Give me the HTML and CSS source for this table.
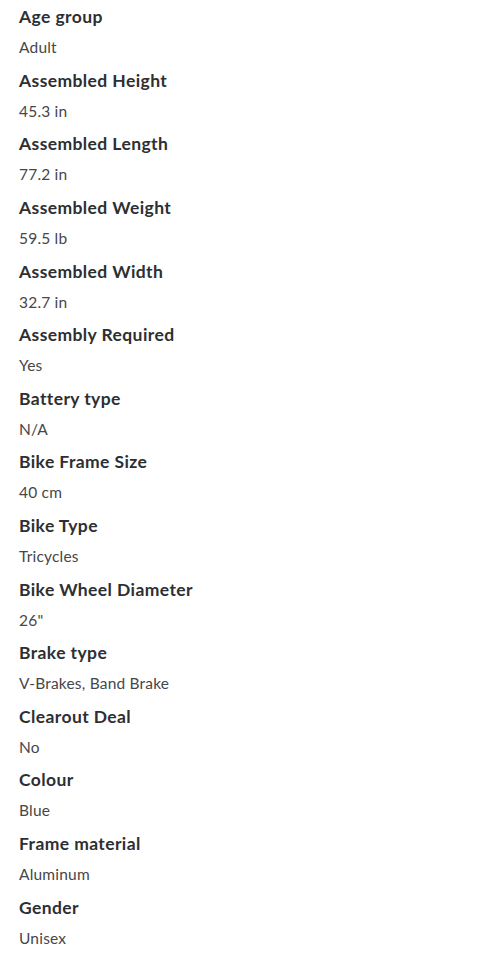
FILE: index.html
```html
<!DOCTYPE html>
<html>
<head>
<meta charset="utf-8">
<link rel="stylesheet" href="styles.css">
</head>
<body>
<dl class="specs">
  <div class="spec"><dt class="label">Age group</dt><dd class="value">Adult</dd></div>
  <div class="spec"><dt class="label">Assembled Height</dt><dd class="value">45.3 in</dd></div>
  <div class="spec"><dt class="label">Assembled Length</dt><dd class="value">77.2 in</dd></div>
  <div class="spec"><dt class="label">Assembled Weight</dt><dd class="value">59.5 lb</dd></div>
  <div class="spec"><dt class="label">Assembled Width</dt><dd class="value">32.7 in</dd></div>
  <div class="spec"><dt class="label">Assembly Required</dt><dd class="value">Yes</dd></div>
  <div class="spec"><dt class="label">Battery type</dt><dd class="value">N/A</dd></div>
  <div class="spec"><dt class="label">Bike Frame Size</dt><dd class="value">40 cm</dd></div>
  <div class="spec"><dt class="label">Bike Type</dt><dd class="value">Tricycles</dd></div>
  <div class="spec"><dt class="label">Bike Wheel Diameter</dt><dd class="value">26"</dd></div>
  <div class="spec"><dt class="label">Brake type</dt><dd class="value">V-Brakes, Band Brake</dd></div>
  <div class="spec"><dt class="label">Clearout Deal</dt><dd class="value">No</dd></div>
  <div class="spec"><dt class="label">Colour</dt><dd class="value">Blue</dd></div>
  <div class="spec"><dt class="label">Frame material</dt><dd class="value">Aluminum</dd></div>
  <div class="spec"><dt class="label">Gender</dt><dd class="value">Unisex</dd></div>
</dl>
</body>
</html>
```
FILE: styles.css
```css
html, body {
  margin: 0;
  padding: 0;
  background: #ffffff;
}
.specs {
  margin: 0;
  padding: 5.2px 0 0 19px;
  display: flex;
  flex-direction: column;
  font-family: Lato, "Open Sans", sans-serif;
}
.spec {
  height: 63.6px;
  display: flex;
  flex-direction: column;
}
.label {
  margin: 0;
  font-size: 17.5px;
  font-weight: 700;
  line-height: 24px;
  letter-spacing: 0.4px;
  color: #2e2f32;
}
.value {
  margin: 6.1px 0 0 0;
  font-size: 15.5px;
  line-height: 24px;
  letter-spacing: 0.2px;
  color: #46474a;
}
```
